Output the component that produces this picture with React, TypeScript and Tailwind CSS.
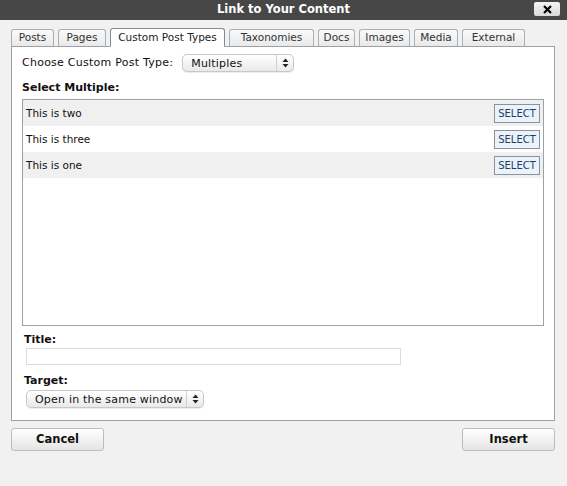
import React from "react";

const tabs = [
  { label: "Posts", width: "w-[43px]" },
  { label: "Pages", width: "w-[48px]" },
  { label: "Custom Post Types", width: "w-[115px]", active: true },
  { label: "Taxonomies", width: "w-[85px]" },
  { label: "Docs", width: "w-[37px]" },
  { label: "Images", width: "w-[51px]" },
  { label: "Media", width: "w-[44px]" },
  { label: "External", width: "w-[63px]" },
];

const rows = ["This is two", "This is three", "This is one"];

function Arrows() {
  return (
    <svg width="7" height="10" viewBox="0 0 7 10" className="block">
      <path d="M3.5 0.5 L6.5 4 L0.5 4 Z" fill="#222" />
      <path d="M3.5 9.5 L6.5 6 L0.5 6 Z" fill="#222" />
    </svg>
  );
}

function FakeSelect({ value, width }: { value: string; width: string }) {
  return (
    <div
      className={`flex h-[18px] ${width} items-center rounded-[5px] border border-[#c8c8c8] bg-gradient-to-b from-white to-[#e9e9e9] shadow-[0_1px_1px_rgba(0,0,0,0.08)]`}
    >
      <span className="flex-1 truncate pl-[8px] text-[11px] leading-none tracking-[0.2px] text-[#111]">{value}</span>
      <span className="flex h-full w-[17px] items-center justify-center border-l border-[#cfcfcf]">
        <Arrows />
      </span>
    </div>
  );
}

export default function App() {
  return (
    <div className="h-[486px] w-[567px] overflow-hidden bg-[#f1f1f1] font-['DejaVu_Sans',sans-serif] text-[#222]">
      <header className="relative flex h-[20px] items-center justify-center bg-[#474747]">
        <h1 className="text-[11.5px] font-bold text-white">Link to Your Content</h1>
        <button
          type="button"
          className="absolute right-[7px] top-[2px] flex h-[14px] w-[26px] items-center justify-center rounded-[2px] bg-gradient-to-b from-[#f4f4f4] to-[#d9d9d9]"
        >
          <svg width="9" height="9" viewBox="0 0 9 9">
            <path d="M1 1 L8 8 M8 1 L1 8" stroke="#000" strokeWidth="2.2" />
          </svg>
        </button>
      </header>

      <div className="pl-[11px] pr-[12px] pt-[8px]">
        <nav className="relative z-10 -mb-px flex items-start gap-[4px]">
          {tabs.map((tab) =>
            tab.active ? (
              <div
                key={tab.label}
                className={`${tab.width} flex h-[19px] items-center justify-center rounded-t-[3px] border border-b-white border-[#7d8c97] bg-white text-[10.5px] text-[#222]`}
              >
                {tab.label}
              </div>
            ) : (
              <div
                key={tab.label}
                className={`${tab.width} mt-px flex h-[17px] items-center justify-center rounded-t-[3px] border border-b-0 border-[#a9b0b5] bg-gradient-to-b from-[#fafafa] to-[#e9e9e9] text-[10.5px] text-[#333]`}
              >
                {tab.label}
              </div>
            )
          )}
        </nav>

        <section className="flex h-[375px] flex-col border border-[#98a2a8] bg-white px-[10px] pt-[7px]">
          <div className="flex items-center gap-[9px]">
            <span className="text-[11px] tracking-[0.25px] text-[#111]">Choose Custom Post Type:</span>
            <FakeSelect value="Multiples" width="w-[112px]" />
          </div>

          <div className="mt-[10px] text-[11px] font-bold leading-[12px] text-[#111]">Select Multiple:</div>

          <div className="mt-[5px] h-[227px] border border-[#98a2a8] bg-white">
            {rows.map((row, i) => (
              <div
                key={row}
                className={`flex h-[26px] items-center justify-between pl-[3px] pr-[3px] ${
                  i % 2 === 0 ? "bg-[#f0f0f0]" : "bg-white"
                }`}
              >
                <span className="pt-px text-[10.5px] text-[#111]">{row}</span>
                <button
                  type="button"
                  className="flex h-[19px] w-[46px] items-center justify-center border border-[#8b9399] bg-[#eaf2fb] text-[10px] text-[#1d3f66]"
                >
                  SELECT
                </button>
              </div>
            ))}
          </div>

          <label className="ml-[2px] mt-[8px] text-[11px] font-bold leading-[12px] text-[#111]">Title:</label>
          <input
            type="text"
            className="ml-[4px] mt-[2px] h-[17px] w-[375px] border border-[#dcdcdc] bg-white outline-none"
          />

          <label className="ml-[2px] mt-[10px] text-[11px] font-bold leading-[12px] text-[#111]">Target:</label>
          <div className="ml-[4px] mt-[3px]">
            <FakeSelect value="Open in the same window" width="w-[178px]" />
          </div>
        </section>

        <footer className="mt-[7px] flex justify-between">
          <button
            type="button"
            className="h-[23px] w-[93px] rounded-[3px] border border-[#bdbdbd] bg-gradient-to-b from-white to-[#e4e4e4] text-[11.5px] font-bold text-[#111]"
          >
            Cancel
          </button>
          <button
            type="button"
            className="h-[23px] w-[93px] rounded-[3px] border border-[#bdbdbd] bg-gradient-to-b from-white to-[#e4e4e4] text-[11.5px] font-bold text-[#111]"
          >
            Insert
          </button>
        </footer>
      </div>
    </div>
  );
}
